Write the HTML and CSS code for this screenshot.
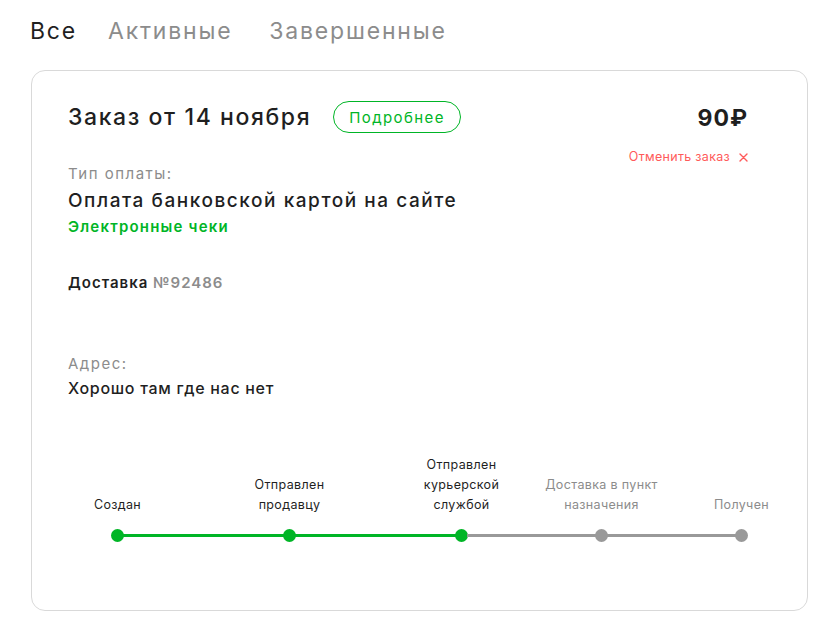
FILE: index.html
```html
<!DOCTYPE html>
<html lang="ru">
<head>
<meta charset="utf-8">
<link rel="stylesheet" href="styles.css">
</head>
<body>
<nav class="tabs">
  <span class="tab active">Все</span>
  <span class="tab">Активные</span>
  <span class="tab">Завершенные</span>
</nav>
<section class="card">
  <div class="top">
    <div class="main">
      <div class="title-row">
        <h2 class="title">Заказ от 14 ноября</h2>
        <button class="more">Подробнее</button>
      </div>
      <div class="label pay-label">Тип оплаты:</div>
      <div class="pay-value">Оплата банковской картой на сайте</div>
      <a class="receipts">Электронные чеки</a>
      <div class="delivery">Доставка <span class="num">№92486</span></div>
      <div class="label addr-label">Адрес:</div>
      <div class="addr">Хорошо там где нас нет</div>
    </div>
    <div class="aside">
      <div class="price">90₽</div>
      <a class="cancel">Отменить заказ
        <svg class="x" width="9" height="9" viewBox="0 0 9 9"><path d="M1 1L8 8M8 1L1 8" stroke="#ff5a5a" stroke-width="1.4" stroke-linecap="round"/></svg>
      </a>
    </div>
  </div>
  <div class="timeline">
    <div class="step done"><div class="step-label">Создан</div><span class="dot"></span></div>
    <span class="line green w1"></span>
    <div class="step done"><div class="step-label">Отправлен<br>продавцу</div><span class="dot"></span></div>
    <span class="line green w1"></span>
    <div class="step done"><div class="step-label">Отправлен<br>курьерской<br>службой</div><span class="dot"></span></div>
    <span class="line gray w2"></span>
    <div class="step"><div class="step-label">Доставка в пункт<br>назначения</div><span class="dot"></span></div>
    <span class="line gray w2"></span>
    <div class="step"><div class="step-label">Получен</div><span class="dot"></span></div>
  </div>
</section>
</body>
</html>
```
FILE: styles.css
```css
* { box-sizing: border-box; }
body {
  margin: 0;
  background: #fff;
  font-family: Inter, "Noto Sans", sans-serif;
  color: #1f1f1f;
}
.tabs {
  display: flex;
  padding: 16px 0 0 30px;
  height: 70px;
}
.tab {
  font-size: 23px;
  line-height: 30px;
  color: #8c8c8c;
  letter-spacing: 1.8px;
}
.tab + .tab { margin-left: 31px; }
.tab:last-child { margin-left: 37px; }
.tab.active { color: #1f1f1f; }
.card {
  margin: 0 31px 0 31px;
  width: 777px;
  height: 541px;
  border: 1px solid #d9d9d9;
  border-radius: 14px;
  padding: 30px 59px 0 36px;
}
.top {
  display: flex;
  justify-content: space-between;
}
.main { display: flex; flex-direction: column; align-items: flex-start; }
.title-row { display: flex; align-items: center; gap: 22px; height: 32px; }
.title {
  margin: 0;
  font-size: 23px;
  font-weight: 500;
  letter-spacing: 1.6px;
  color: #1f1f1f;
}
.more {
  height: 32px;
  padding: 0 15px;
  border: 1px solid #00b526;
  border-radius: 16px;
  background: #fff;
  color: #00b526;
  font-family: inherit;
  font-size: 15px;
  letter-spacing: 1.4px;
}
.label {
  font-size: 15px;
  line-height: 20px;
  color: #8c8c8c;
  letter-spacing: 1.5px;
}
.pay-label { margin-top: 31px; }
.pay-value {
  margin-top: 4px;
  font-size: 19px;
  line-height: 26px;
  font-weight: 500;
  letter-spacing: 1.55px;
}
.receipts {
  margin-top: 3px;
  font-size: 15px;
  line-height: 20px;
  font-weight: 600;
  color: #00b526;
  letter-spacing: 1.2px;
}
.delivery {
  margin-top: 36px;
  font-size: 15px;
  line-height: 20px;
  font-weight: 600;
  letter-spacing: 1px;
}
.delivery .num { color: #8c8c8c; }
.addr-label { margin-top: 61px; }
.addr {
  margin-top: 3px;
  font-size: 16px;
  line-height: 22px;
  font-weight: 500;
  letter-spacing: 0.7px;
}
.aside {
  display: flex;
  flex-direction: column;
  align-items: flex-end;
}
.price {
  height: 32px;
  line-height: 34px;
  font-size: 23px;
  font-weight: 700;
  letter-spacing: 1px;
}
.cancel {
  margin-top: 15px;
  display: flex;
  align-items: center;
  font-size: 12.5px;
  line-height: 18px;
  color: #ff5a5a;
  letter-spacing: 0.3px;
}
.cancel .x { margin-left: 9px; }
.timeline {
  display: flex;
  align-items: flex-end;
  margin-top: 56px;
  padding-left: 43px;
}
.step {
  width: 13px;
  display: flex;
  flex-direction: column;
  align-items: center;
}
.step-label {
  width: max-content;
  text-align: center;
  font-size: 12.5px;
  line-height: 20px;
  color: #1f1f1f;
  letter-spacing: 0.35px;
  margin-bottom: 14px;
}
.step:not(.done) .step-label { color: #8c8c8c; }
.dot {
  width: 13px;
  height: 13px;
  border-radius: 50%;
  background: #999;
}
.step.done .dot { background: #00b526; }
.line {
  height: 3px;
  margin: 0 -1px 5px;
  background: #999;
}
.line.green { background: #00b526; }
.w1 { width: 161px; }
.w2 { width: 129px; }
```
